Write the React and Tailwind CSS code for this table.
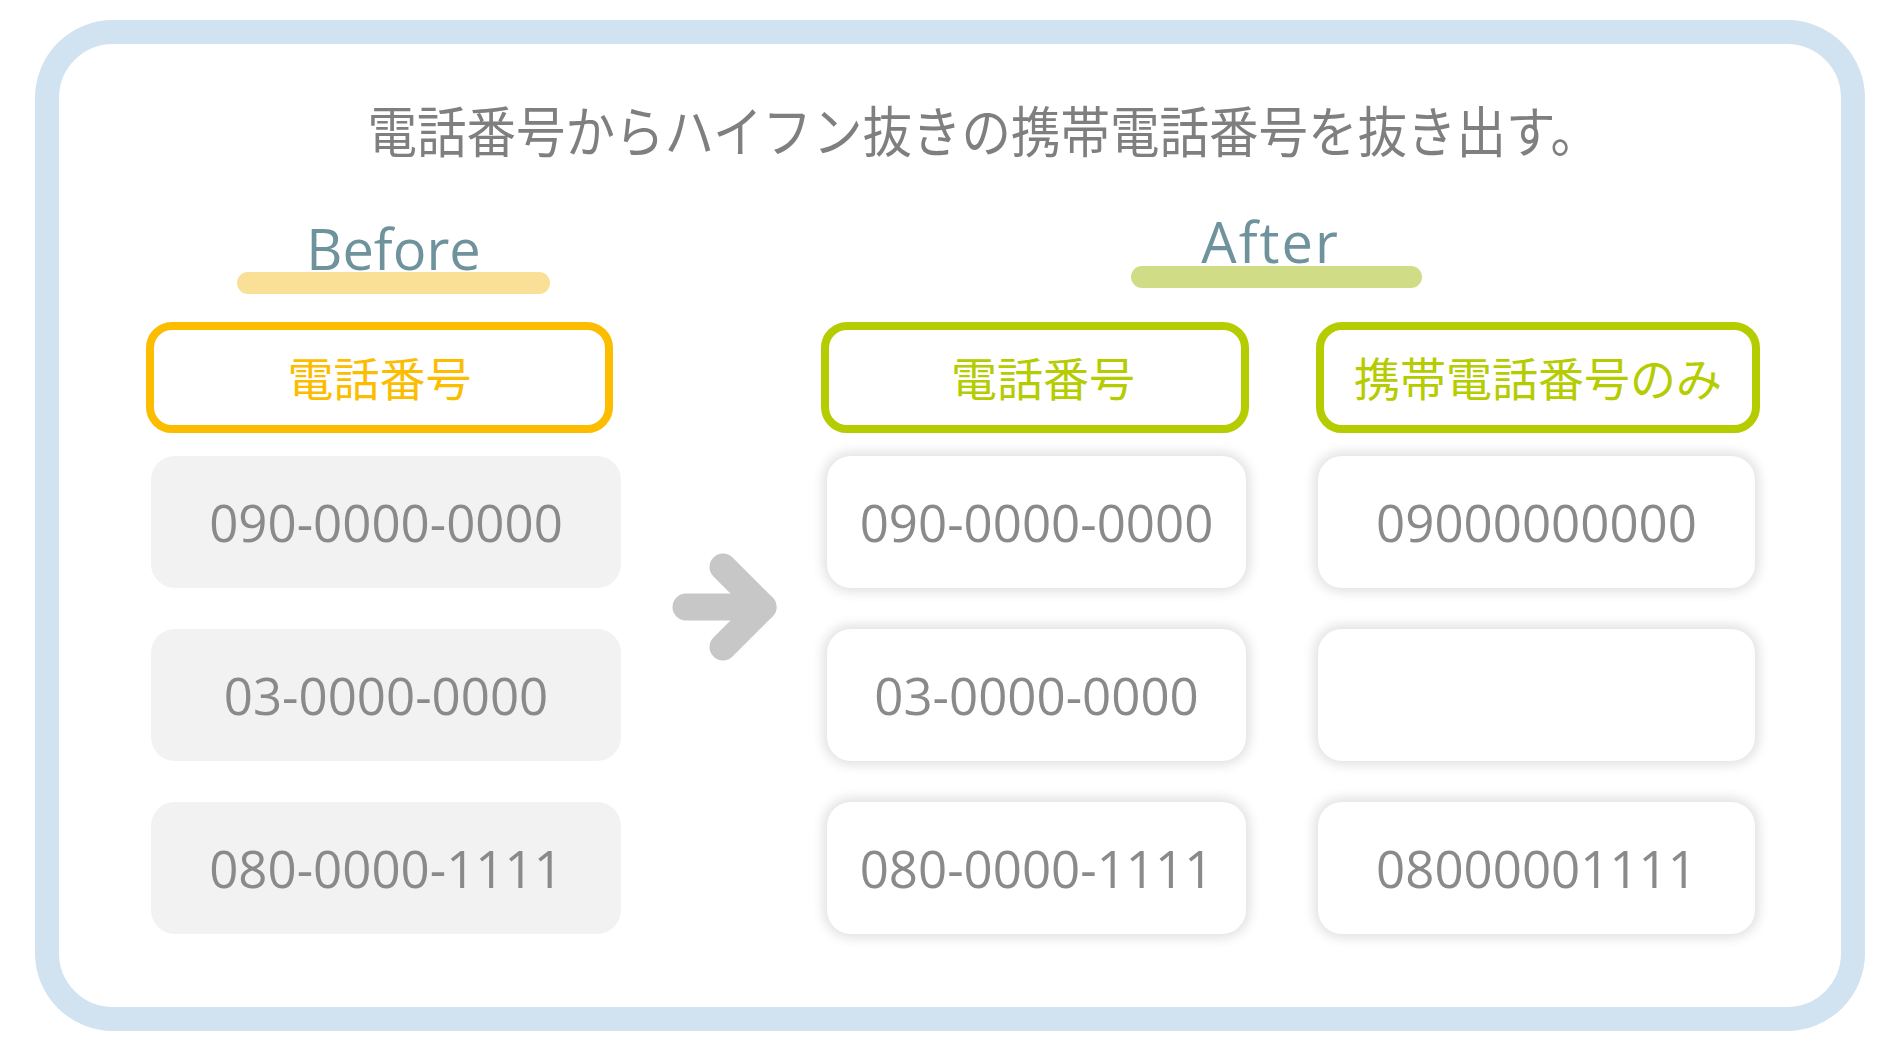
import React from "react";

const jp = { fontFamily: '"Noto Sans CJK JP", "Noto Sans", sans-serif' };
const os = { fontFamily: '"Open Sans", "Noto Sans", sans-serif' };

function HeaderBox({ color, width, shift = "0px", children }) {
  return (
    <div
      className={`h-[111px] border-[8px] rounded-[26px] flex items-center justify-center pb-[3px] text-[46px] leading-none ${color}`}
      style={{ ...jp, width, paddingLeft: shift }}
    >
      {children}
    </div>
  );
}

function BeforeRow({ children, first }) {
  return (
    <div
      className={`ml-[5px] w-[470px] h-[132px] rounded-[24px] bg-[#f2f2f2] flex items-center justify-center text-[51px] leading-none text-[#8a8a8a] ${first ? "mt-[23px]" : "mt-[41px]"}`}
      style={os}
    >
      {children}
    </div>
  );
}

function AfterRow({ children, first, ml, width }) {
  return (
    <div
      className={`h-[132px] rounded-[24px] bg-white shadow-[0_0_12px_4px_rgba(0,0,0,0.12)] flex items-center justify-center text-[51px] leading-none text-[#8a8a8a] ${first ? "mt-[23px]" : "mt-[41px]"}`}
      style={{ ...os, marginLeft: ml, width }}
    >
      {children}
    </div>
  );
}

export default function App() {
  return (
    <div className="w-[1890px] h-[1063px] bg-white pl-[35px] pt-[20px]">
      <div className="w-[1830px] h-[1011px] border-[24px] border-[#d1e2f1] rounded-[78px] flex flex-col">
        {/* Title */}
        <div className="pt-[57px] pl-[68px] text-center">
          <span
            className="inline-block text-[55px] leading-none text-[#7f7f7f] scale-x-90"
            style={jp}
          >
            電話番号からハイフン抜きの携帯電話番号を抜き出す。
          </span>
        </div>

        {/* Headings */}
        <div className="flex items-start mt-[55px]">
          <div className="ml-[178px] w-[313px] mt-[7px] flex flex-col">
            <div className="text-center text-[56px] leading-none text-[#6f939d]" style={os}>
              Before
            </div>
            <div className="-mt-[4px] h-[22px] rounded-full bg-[#f9e096]" />
          </div>
          <div className="ml-[581px] w-[291px] flex flex-col">
            <div className="text-center pr-[12px] text-[56px] leading-none text-[#6f939d] tracking-[2px]" style={os}>
              After
            </div>
            <div className="-mt-[3px] h-[22px] rounded-full bg-[#d1dd86]" />
          </div>
        </div>

        {/* Columns */}
        <div className="flex mt-[28px] pl-[87px]">
          <div className="w-[475px] flex flex-col">
            <HeaderBox color="border-[#fcbd00] text-[#fcbd00]" width="467px">電話番号</HeaderBox>
            <BeforeRow first>090-0000-0000</BeforeRow>
            <BeforeRow>03-0000-0000</BeforeRow>
            <BeforeRow>080-0000-1111</BeforeRow>
          </div>

          <div className="w-[200px] pl-[49px] pt-[229px]">
            <svg width="110" height="112" viewBox="0 0 110 112">
              <g stroke="#c7c7c7" strokeWidth="27" strokeLinecap="round" strokeLinejoin="round" fill="none">
                <line x1="16" y1="56" x2="93" y2="56" />
                <polyline points="53,16 93,56 53,96" />
              </g>
            </svg>
          </div>

          <div className="w-[428px] flex flex-col">
            <HeaderBox color="border-[#b4cc00] text-[#b4cc00]" width="428px" shift="16px">電話番号</HeaderBox>
            <AfterRow first ml="6px" width="419px">090-0000-0000</AfterRow>
            <AfterRow ml="6px" width="419px">03-0000-0000</AfterRow>
            <AfterRow ml="6px" width="419px">080-0000-1111</AfterRow>
          </div>

          <div className="ml-[67px] w-[444px] flex flex-col">
            <HeaderBox color="border-[#b4cc00] text-[#b4cc00]" width="444px">携帯電話番号のみ</HeaderBox>
            <AfterRow first ml="2px" width="437px">09000000000</AfterRow>
            <AfterRow ml="2px" width="437px"></AfterRow>
            <AfterRow ml="2px" width="437px">08000001111</AfterRow>
          </div>
        </div>
      </div>
    </div>
  );
}
